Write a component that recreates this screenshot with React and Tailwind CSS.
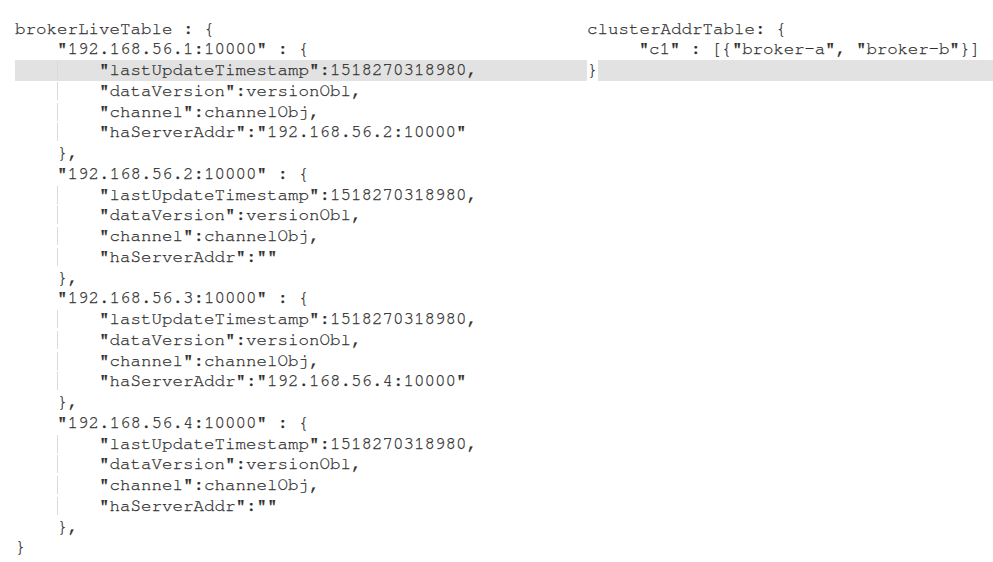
const left = [
  [0, "brokerLiveTable : {"],
  [1, "\"192.168.56.1:10000\" : {"],
  [2, "\"lastUpdateTimestamp\":1518270318980,", true],
  [2, "\"dataVersion\":versionObl,"],
  [2, "\"channel\":channelObj,"],
  [2, "\"haServerAddr\":\"192.168.56.2:10000\""],
  [1, "},"],
  [1, "\"192.168.56.2:10000\" : {"],
  [2, "\"lastUpdateTimestamp\":1518270318980,"],
  [2, "\"dataVersion\":versionObl,"],
  [2, "\"channel\":channelObj,"],
  [2, "\"haServerAddr\":\"\""],
  [1, "},"],
  [1, "\"192.168.56.3:10000\" : {"],
  [2, "\"lastUpdateTimestamp\":1518270318980,"],
  [2, "\"dataVersion\":versionObl,"],
  [2, "\"channel\":channelObj,"],
  [2, "\"haServerAddr\":\"192.168.56.4:10000\""],
  [1, "},"],
  [1, "\"192.168.56.4:10000\" : {"],
  [2, "\"lastUpdateTimestamp\":1518270318980,"],
  [2, "\"dataVersion\":versionObl,"],
  [2, "\"channel\":channelObj,"],
  [2, "\"haServerAddr\":\"\""],
  [1, "},"],
  [0, "}"],
];

function Line({ level, text, active }) {
  return (
    <div className={`h-[20.75px] whitespace-pre ${active ? "bg-[#e2e2e2]" : ""}`}>
      {level === 0 && text}
      {level === 1 && "    " + text}
      {level === 2 && (
        <>
          {"    "}
          <span className="shadow-[inset_1px_0_0_#dadada]">{"    "}</span>
          {text}
        </>
      )}
    </div>
  );
}

export default function App() {
  return (
    <div
      className="flex w-[993px] h-[562px] bg-white pt-[18.5px] text-[17.5px] leading-[20.75px] text-[#2f2f2f] [-webkit-text-stroke:0.25px_#2f2f2f]"
      style={{ fontFamily: '"Nimbus Mono PS", "Nimbus Mono L", FreeMono, "Liberation Mono", monospace' }}
    >
      <div className="w-[587px] pl-[15px]">
        {left.map(([level, text, active], i) => (
          <Line key={i} level={level} text={text} active={active} />
        ))}
      </div>
      <div className="flex-1">
        <div className="h-[20.75px] whitespace-pre">clusterAddrTable: {"{"}</div>
        <div className="h-[20.75px] whitespace-pre tracking-[-0.15px]">
          {"     \"c1\" : [{\"broker-a\", \"broker-b\"}]"}
        </div>
        <div className="h-[20.75px] whitespace-pre flex">
          <span className="bg-white">{"}"}</span>
          <span className="flex-1 bg-[#e2e2e2]"></span>
        </div>
      </div>
    </div>
  );
}
